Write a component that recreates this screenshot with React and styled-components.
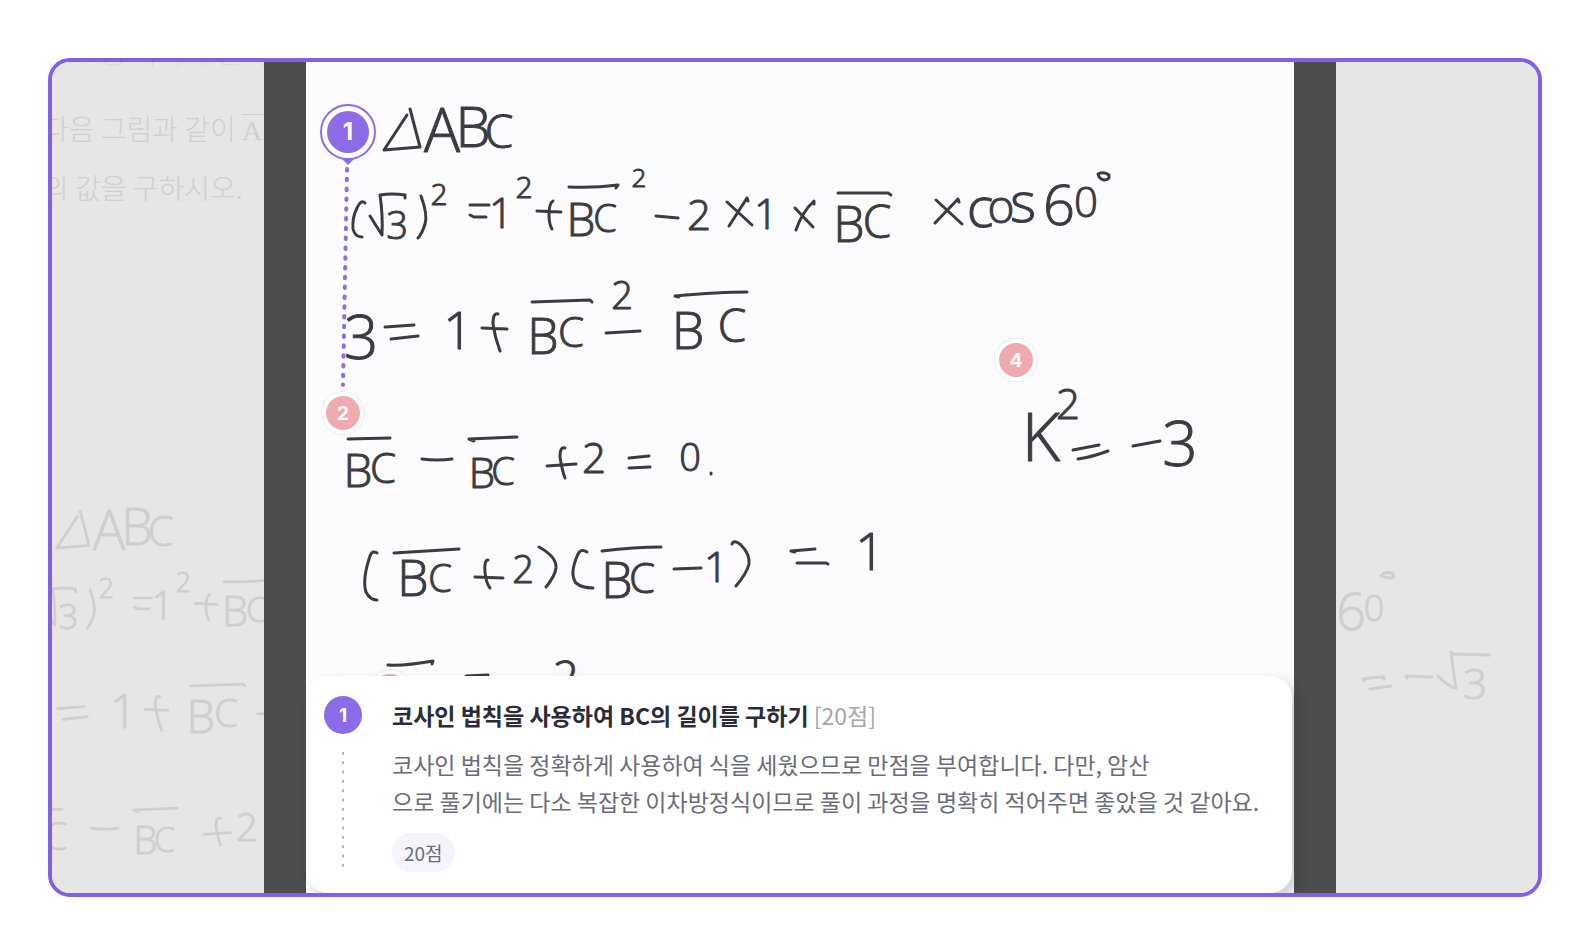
import styled, { createGlobalStyle } from "styled-components";

const MAIN_INK = {
	strokes: [
		// triangle ABC
		"M407 115 L384 150 L420 147 L410 109",
		// (√3)² = 1² + BC² - 2 × 1 × BC × cos60°
		"M365 203 Q361 199 357 208 Q352 218 353 229 Q355 237 362 237",
		"M370 216 L382 235 Q383 215 380 195 Q392 193 405 195 L405 198",
		"M421 196 Q428 215 425 224 Q422 234 418 238",
		"M470 205 L489 205 M470 215 L474 217 L486 217",
		"M537 211 L561 212 M553 201 Q549 203 549 215 Q549 224 552 229",
		"M569 187 Q595 188 618 185 L616 188",
		"M656 216 L678 218",
		"M727 202 L752 225 M748 201 L747 198 L729 226",
		"M795 208 L813 227 M814 204 L814 201 Q802 212 796 230",
		"M838 193 L888 193 L891 195",
		"M936 200 L962 224 M959 202 L958 199 L935 223",
		"M1098 174 Q1104 171 1109 175 Q1110 180 1104 180 Q1099 179 1098 174",
		// 3 = 1 + BC² - BC
		"M385 327 L414 325 M391 339 L418 336",
		"M482 328 L507 329 M498 314 Q493 312 493 324 Q495 338 500 351",
		"M532 302 Q560 301 590 300 L592 302",
		"M606 333 L640 331",
		"M679 297 L675 296 Q720 292 747 292",
		// BC - BC + 2 = 0.
		"M348 439 L390 438",
		"M422 459 Q438 461 452 459",
		"M474 441 L469 439 L517 437",
		"M547 466 L576 464 M565 448 Q560 446 560 457 Q562 470 565 478",
		"M629 458 L649 456 M629 468 L650 467",
		"M711 473 L711 474",
		// (BC + 2)(BC - 1) = 1
		"M377 553 Q372 550 370 556 Q362 580 366 592 Q370 600 377 600",
		"M394 553 L459 549",
		"M475 577 L503 578 M488 560 Q484 560 485 572 Q486 583 490 588",
		"M539 547 Q557 557 556 568 Q555 576 546 587",
		"M587 552 Q581 548 578 554 Q569 574 576 583 Q582 588 593 588",
		"M602 551 Q635 547 661 547",
		"M674 569 L701 568",
		"M732 544 Q734 539 741 545 Q750 554 749 564 Q747 573 736 586",
		"M795 552 L791 551 L815 549 M797 563 L826 563 L828 564",
		// last line, cut off by the feedback sheet
		"M388 665 Q405 666 433 661 L432 664",
		"M466 676 L488 675",
		// K² = -3
		"M1073 450 L1099 445 M1078 459 Q1092 457 1108 451",
		"M1133 446 L1160 441",
	],
	glyphs: [
		["A", 442, 152, 60],
		["B", 473, 147, 56],
		["C", 499, 148, 46],
		["3", 397, 239, 38],
		["2", 439, 205, 30],
		["1", 501, 228, 42],
		["2", 524, 198, 30],
		["B", 581, 236, 46],
		["C", 605, 232, 38],
		["2", 639, 187, 26],
		["2", 699, 230, 42],
		["1", 766, 229, 42],
		["B", 849, 242, 50],
		["C", 877, 238, 46],
		["c", 980, 227, 56],
		["o", 1001, 223, 46],
		["s", 1023, 222, 56],
		["6", 1059, 225, 56],
		["0", 1086, 217, 42],
		["3", 361, 359, 60],
		["1", 458, 349, 52],
		["B", 543, 354, 50],
		["C", 571, 347, 42],
		["2", 622, 309, 38],
		["B", 688, 349, 52],
		["C", 732, 342, 46],
		["B", 358, 487, 46],
		["C", 383, 483, 42],
		["B", 482, 488, 42],
		["C", 503, 485, 38],
		["2", 594, 473, 42],
		["0", 690, 471, 38],
		["B", 413, 596, 50],
		["C", 440, 592, 38],
		["2", 523, 583, 38],
		["B", 617, 598, 50],
		["C", 642, 593, 42],
		["1", 716, 582, 42],
		["1", 870, 570, 52],
		["2", 566, 694, 46],
		["K", 1041, 461, 66],
		["2", 1068, 419, 42],
		["3", 1180, 466, 62],
	],
};

const SIDE_INK = {
	strokes: [
		"M1381 576 Q1384 571 1392 573 Q1396 578 1391 578 Q1385 578 1381 576",
		"M1364 681 L1363 679 Q1374 677 1384 677 L1384 679 M1370 689 L1391 686",
		"M1407 678 L1406 676 L1432 677",
		"M1438 676 Q1450 688 1456 688 Q1453 670 1451 652 L1453 654 L1490 655",
	],
	glyphs: [
		["6", 1351, 630, 52],
		["0", 1374, 621, 36],
		["3", 1475, 699, 42],
	],
};

function Ink({ ink, ...props }) {
	return (
		<InkSvg {...props}>
			{ink.strokes.map((d) => (
				<path key={d} d={d} />
			))}
			{ink.glyphs.map(([char, x, y, size]) => (
				<text key={`${x}-${y}`} x={x} y={y} fontSize={size}>
					{char}
				</text>
			))}
		</InkSvg>
	);
}

export default function App() {
	return (
		<>
			<GlobalStyle />
			<Page>
				<Viewer>
					<SidePanel>
						<Problem>
							<p>고르 중 하나의 선택해정 보</p>
							<p>
								다음 그림과 같이 <Segment>AB</Segment>
							</p>
							<p>의 값을 구하시오.</p>
						</Problem>
						<Ink ink={MAIN_INK} width="212" height="831" viewBox="379 -386 234 916" />
					</SidePanel>
					<Backdrop>
						<Paper>
							<Canvas>
								<Ink ink={MAIN_INK} width="988" height="614" viewBox="306 62 988 614" />
								<Connector width="20" height="240" viewBox="0 0 20 240">
									<path d="M15 8 L11 224" />
								</Connector>
								<ActivePin type="button" $x={42} $y={70}>
									<Dot $size={42}>1</Dot>
								</ActivePin>
								<Pin type="button" $x={37} $y={351}>
									<Dot $size={34} $muted>2</Dot>
								</Pin>
								<Pin type="button" $x={84} $y={629}>
									<Dot $size={34} $muted />
								</Pin>
								<Pin type="button" $x={710} $y={298}>
									<Dot $size={34} $muted>4</Dot>
								</Pin>
							</Canvas>
							<Sheet>
								<Rail>
									<Dot $size={38}>1</Dot>
									<RailLine />
								</Rail>
								<Feedback>
									<Title>
										코사인 법칙을 사용하여 BC의 길이를 구하기 <Points>[20점]</Points>
									</Title>
									<Comment>
										코사인 법칙을 정확하게 사용하여 식을 세웠으므로 만점을 부여합니다. 다만, 암산
										<br />
										으로 풀기에는 다소 복잡한 이차방정식이므로 풀이 과정을 명확히 적어주면 좋았을 것 같아요.
									</Comment>
									<Score>20점</Score>
								</Feedback>
							</Sheet>
						</Paper>
					</Backdrop>
					<SidePanel>
						<Ink ink={SIDE_INK} width="202" height="831" viewBox="1336 62 202 831" />
					</SidePanel>
				</Viewer>
			</Page>
		</>
	);
}

const GlobalStyle = createGlobalStyle`
	* {
		box-sizing: border-box;
	}

	body {
		margin: 0;
		background: #ffffff;
		font-family: "Noto Sans CJK KR", sans-serif;
	}

	p, h2 {
		margin: 0;
	}
`;

const Page = styled.main`
	display: flex;
	min-height: 100vh;
	padding: 58px 44px 45px 48px;
`;

const Viewer = styled.div`
	display: grid;
	grid-template-columns: 212fr 1072fr 202fr;
	width: 100%;
	border: 4px solid #835fe8;
	border-radius: 22px;
	overflow: hidden;
`;

const SidePanel = styled.aside`
	display: grid;
	min-width: 0;
	background: #e6e6e6;
	color: #cfcfcf;
	overflow: hidden;

	> * {
		grid-area: 1 / 1;
	}
`;

const Problem = styled.div`
	margin: -38px 0 0 -9px;
	font-size: 28px;
	font-weight: 300;
	line-height: 56px;
	white-space: nowrap;

	p:first-child {
		margin-bottom: 20px;
		color: #dadada;
	}
`;

const Segment = styled.span`
	font-family: "Liberation Serif", serif;
	text-decoration: overline;
	text-decoration-thickness: 1px;
`;

const Backdrop = styled.section`
	display: flex;
	min-width: 0;
	padding: 0 42px;
	background: #4d4d4d;
	overflow: hidden;
`;

const Paper = styled.div`
	display: flex;
	flex-direction: column;
	width: 100%;
	background: #fcfcff;
`;

const Canvas = styled.div`
	position: relative;
	flex: 1;
	min-height: 614px;
	overflow: hidden;
	color: #3b3b41;
`;

const InkSvg = styled.svg`
	display: block;

	path {
		fill: none;
		stroke: currentColor;
		stroke-width: 3px;
		stroke-linecap: round;
		stroke-linejoin: round;
	}

	text {
		fill: currentColor;
		stroke: currentColor;
		stroke-width: 1px;
		stroke-linejoin: round;
		font-family: "Open Sans", sans-serif;
		font-weight: 300;
		text-anchor: middle;
	}
`;

const Connector = styled.svg`
	position: absolute;
	top: 99px;
	left: 26px;

	path {
		fill: none;
		stroke: #8f6ce0;
		stroke-width: 4px;
		stroke-linecap: round;
		stroke-dasharray: 1.5 8.3;
	}
`;

const Pin = styled.button`
	position: absolute;
	left: ${({ $x }) => $x}px;
	top: ${({ $y }) => $y}px;
	display: flex;
	align-items: center;
	justify-content: center;
	width: 44px;
	height: 44px;
	padding: 0;
	border: 1px solid #ececf0;
	border-radius: 50%;
	background: #ffffff;
	transform: translate(-50%, -50%);
`;

const ActivePin = styled(Pin)`
	width: 56px;
	height: 56px;
	border: 2px solid #8e6be6;

	&::after {
		content: "";
		position: absolute;
		top: 53px;
		border: 6px solid transparent;
		border-top-color: #8e6be6;
		border-bottom: 0;
	}
`;

const Dot = styled.span`
	display: flex;
	flex-shrink: 0;
	align-items: center;
	justify-content: center;
	width: ${({ $size }) => $size}px;
	height: ${({ $size }) => $size}px;
	border-radius: 50%;
	background: ${({ $muted }) => ($muted ? "#efabb0" : "#8e6be6")};
	color: #ffffff;
	font-family: Inter, sans-serif;
	font-size: ${({ $size }) => ($size > 40 ? 24 : 19)}px;
	font-weight: 700;
	line-height: 1;
`;

const Sheet = styled.article`
	position: relative;
	display: flex;
	gap: 30px;
	margin-right: 2px;
	padding: 20px 18px 20px 18px;
	border-radius: 22px;
	background: #ffffff;
	box-shadow: 6px 6px 14px rgba(30, 20, 50, 0.2);
`;

const Rail = styled.div`
	display: flex;
	flex-direction: column;
	align-items: center;
	gap: 18px;
`;

const RailLine = styled.div`
	flex: 1;
	width: 2px;
	background: linear-gradient(#b3b3b8 3px, transparent 3px) 0 0 / 2px 9px;
	background-repeat: space;
`;

const Feedback = styled.div`
	display: flex;
	flex-direction: column;
	align-items: flex-start;
	white-space: nowrap;
`;

const Title = styled.h2`
	color: #2b2c38;
	font-size: 23px;
	font-weight: 700;
	line-height: 38px;
`;

const Points = styled.span`
	color: #a6a5b3;
	font-weight: 400;
`;

const Comment = styled.p`
	margin-top: 12px;
	color: #6a6c7b;
	font-size: 23px;
	line-height: 37px;
`;

const Score = styled.span`
	margin-top: 13px;
	margin-bottom: 1px;
	padding: 0 12px;
	border-radius: 20px;
	background: #f5f4fa;
	color: #6a6c7b;
	font-size: 19px;
	line-height: 39px;
`;
